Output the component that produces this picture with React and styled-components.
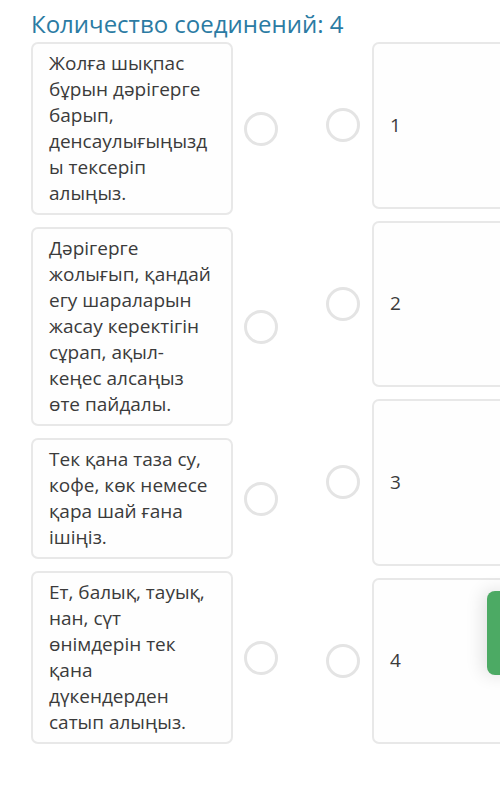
import styled, { createGlobalStyle } from 'styled-components'

const GlobalStyle = createGlobalStyle`
  html, body {
    margin: 0;
    padding: 0;
    background: #ffffff;
    overflow: hidden;
  }
  body {
    font-family: "Open Sans", "Noto Sans", sans-serif;
  }
`

const Page = styled.div`
  position: relative;
  width: 500px;
  height: 792px;
  padding-left: 31px;
  box-sizing: border-box;
  overflow: hidden;
`

const Title = styled.h2`
  margin: 0;
  padding-top: 9px;
  font-size: 24px;
  line-height: 30px;
  font-weight: 400;
  color: #2b7ba3;
  white-space: nowrap;
`

const Board = styled.div`
  display: flex;
  gap: 48px;
  margin-top: 3px;
`

const Column = styled.div`
  display: flex;
  flex-direction: column;
  gap: 12px;
  flex-shrink: 0;
`

const LeftRow = styled.div`
  display: flex;
  align-items: center;
  gap: 11px;
`

const RightRow = styled.div`
  display: flex;
  align-items: center;
  gap: 12px;
  flex: 1;
`

const Card = styled.div`
  box-sizing: border-box;
  width: 202px;
  flex-shrink: 0;
  padding: 6px 16px 7px 16px;
  border: 2px solid #e8e8e8;
  border-radius: 7px;
  background: #fefefe;
  font-size: 19px;
  line-height: 26px;
  color: #3b3b3b;
  overflow-wrap: break-word;
  word-break: break-word;
`

const NumberCard = styled(Card)`
  align-self: stretch;
  display: flex;
  align-items: center;
`

const Dot = styled.span`
  box-sizing: border-box;
  display: block;
  width: 34px;
  height: 34px;
  flex-shrink: 0;
  border: 3px solid #e4e4e4;
  border-radius: 50%;
  background: #fff;
`

const Handle = styled.div`
  position: absolute;
  left: 487px;
  top: 591px;
  width: 30px;
  height: 84px;
  border-radius: 8px;
  background: #4caa64;
  box-shadow: -4px 0 18px rgba(0, 0, 0, 0.12);
`

const prompts = [
  'Жолға шықпас бұрын дәрігерге барып, денсаулығыңызды тексеріп алыңыз.',
  'Дәрігерге жолығып, қандай егу шараларын жасау керектігін сұрап, ақыл-кеңес алсаңыз өте пайдалы.',
  'Тек қана таза су, кофе, көк немесе қара шай ғана ішіңіз.',
  'Ет, балық, тауық, нан, сүт өнімдерін тек қана дүкендерден сатып алыңыз.',
]

const answers = ['1', '2', '3', '4']

export default function App() {
  return (
    <Page>
      <GlobalStyle />
      <Title>Количество соединений: 4</Title>
      <Board>
        <Column>
          {prompts.map((p) => (
            <LeftRow key={p}>
              <Card>{p}</Card>
              <Dot />
            </LeftRow>
          ))}
        </Column>
        <Column>
          {answers.map((a) => (
            <RightRow key={a}>
              <Dot />
              <NumberCard>{a}</NumberCard>
            </RightRow>
          ))}
        </Column>
      </Board>
      <Handle />
    </Page>
  )
}
